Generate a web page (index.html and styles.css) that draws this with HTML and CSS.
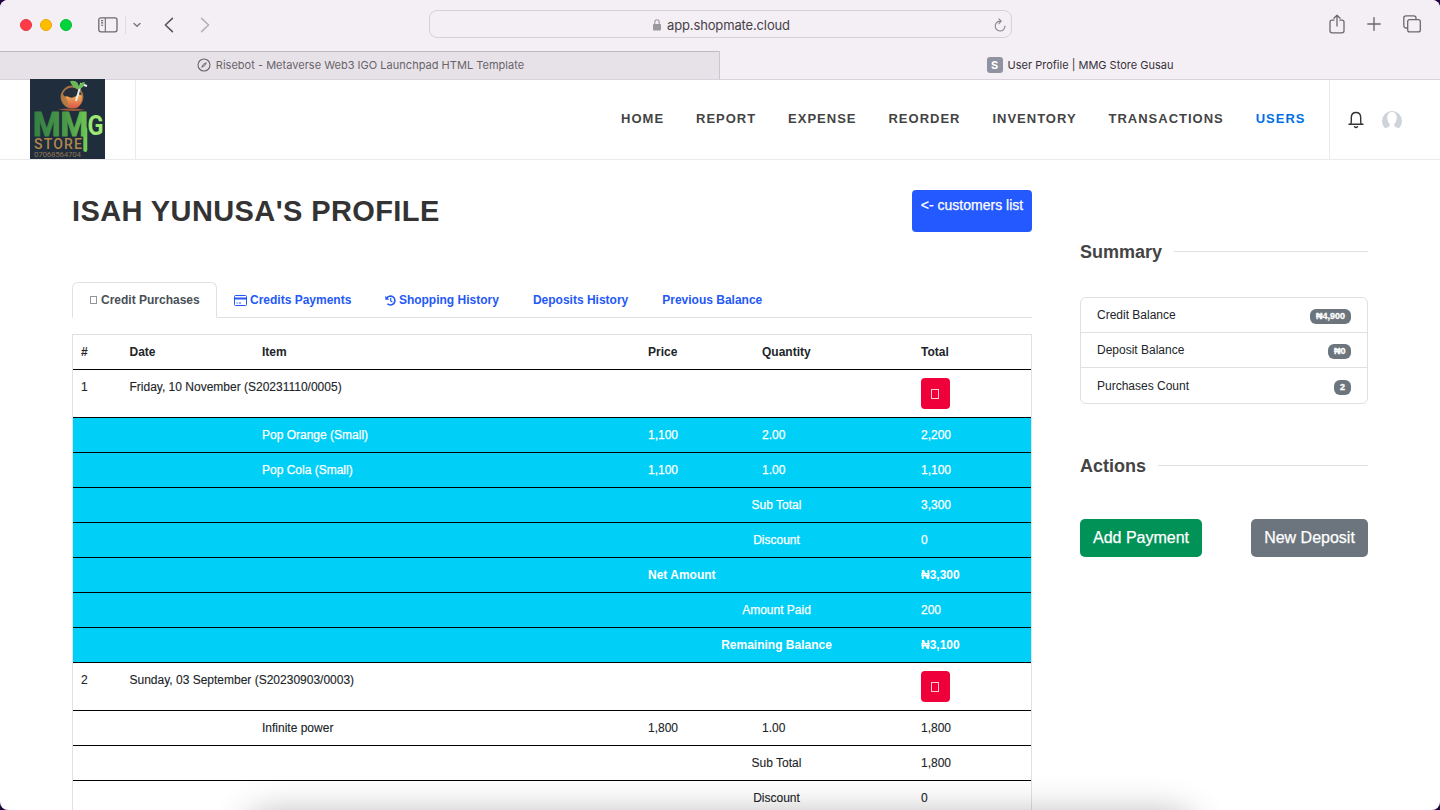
FILE: index.html
```
<!DOCTYPE html>
<html lang="en">
<head>
<meta charset="utf-8">
<title>User Profile | MMG Store Gusau</title>
<link rel="stylesheet" href="styles.css">
</head>
<body>
<div class="window">
  <header class="toolbar">
    <div class="toolbar-left">
      <div class="lights"><i class="light red"></i><i class="light yellow"></i><i class="light green"></i></div>
      <svg class="sidebar-icon" width="20" height="16" viewBox="0 0 20 16" fill="none" stroke="#6c686e" stroke-width="1.3"><rect x=".8" y=".8" width="18.2" height="14" rx="2"/><path d="M7.3 1v14M3 3.6h2.2M3 5.9h2.2M3 8.2h2.2" stroke-width="1.1"/></svg>
      <i class="divider"></i>
      <svg class="chevron" width="8" height="6" viewBox="0 0 8 6" fill="none" stroke="#7b7780" stroke-width="1.4" stroke-linecap="round" stroke-linejoin="round"><path d="M1 1.4l3 2.8 3-2.8"/></svg>
      <svg class="back" width="10" height="16" viewBox="0 0 10 16" fill="none" stroke="#5b575e" stroke-width="1.6" stroke-linecap="round" stroke-linejoin="round"><path d="M8.4 1.3L1.4 8l7 6.7"/></svg>
      <svg class="forward" width="10" height="16" viewBox="0 0 10 16" fill="none" stroke="#b6b1b8" stroke-width="1.6" stroke-linecap="round" stroke-linejoin="round"><path d="M1.6 1.3L8.6 8l-7 6.7"/></svg>
    </div>
    <div class="address">
      <div class="address-text">
        <svg class="lock" width="8" height="12" viewBox="0 0 8 12"><path d="M1.8 6V3.2a2.2 2.4 0 0 1 4.4 0V6" fill="none" stroke="#9b989d" stroke-width="1.1"/><rect x="0" y="5" width="8" height="6.6" rx="1" fill="#9b989d"/></svg>
        <span class="url">app.shopmate.cloud</span>
      </div>
      <svg class="reload" width="12" height="14" viewBox="0 0 12 14" fill="none" stroke="#88848b" stroke-width="1.1" stroke-linecap="round" stroke-linejoin="round"><path d="M6.8 3.2A4.9 4.9 0 1 0 11 8M4.9.9l2.3 2.3-2.3 2.4"/></svg>
    </div>
    <div class="toolbar-right">
      <svg width="16" height="20" viewBox="0 0 16 20" fill="none" stroke="#6c686e" stroke-width="1.3" stroke-linecap="round" stroke-linejoin="round"><path d="M5 6.2H3A2 2 0 0 0 1 8.2v8.600a2 2 0 0 0 2 2h10a2 2 0 0 0 2-2V8.2a2 2 0 0 0-2-2h-2M8 12V1.2M4.900 4.2L8 1.2l3.1 3"/></svg>
      <svg width="14" height="14" viewBox="0 0 14 14" fill="none" stroke="#6c686e" stroke-width="1.4" stroke-linecap="round"><path d="M7 .8v12.4M.8 7h12.4"/></svg>
      <svg width="18" height="18" viewBox="0 0 18 18" fill="none" stroke="#6c686e" stroke-width="1.3" stroke-linejoin="round"><rect x="4.7" y="4.7" width="12.6" height="12.2" rx="2"/><path d="M4.7 13H3a2.2 2.2 0 0 1-2.2-2.2V3A2.2 2.2 0 0 1 3 .8h7.800a2.200 2.200 0 0 1 2.200 2.200v1.700"/></svg>
    </div>
  </header>
  <div class="browser-tabs">
    <div class="browser-tab inactive">
      <svg width="14" height="14" viewBox="0 0 14 14"><circle cx="7" cy="7" r="6" fill="none" stroke="#68646a" stroke-width="1.1"/><path d="M10 4L8 8 4 10l2-4z" fill="#68646a"/><circle cx="7" cy="7" r=".8" fill="#e7e2e8"/></svg>
      <span class="first-title">Risebot - Metaverse Web3 IGO Launchpad HTML Template</span>
    </div>
    <div class="browser-tab">
      <b class="favicon">S</b>
      <span>User Profile | MMG Store Gusau</span>
    </div>
  </div>

  <nav class="site-nav">
    <div class="brand">
      <svg class="logo" width="75" height="80" viewBox="0 0 75 80">
        <defs>
          <linearGradient id="leaf" x1="0" x2="1"><stop offset="0" stop-color="#337f42"/><stop offset=".6" stop-color="#4a9a48"/><stop offset="1" stop-color="#70c855"/></linearGradient>
          <linearGradient id="juice" x1="0" y1="0" x2="0" y2="1"><stop offset="0" stop-color="#f0b65b"/><stop offset="1" stop-color="#df5648"/></linearGradient>
        </defs>
        <rect width="75" height="80" fill="#202d3c"/>
        <circle cx="42" cy="18" r="10.500" fill="#27303a" stroke="#a47345" stroke-width="1.800"/>
        <path d="M33 19q3-3 6-1t7-1 6 0q0 10-6 12-9 1-13-10z" fill="url(#juice)"/>
        <path d="M31.500 14q0 12 7 15 1-8-7-15z" fill="#b57b43"/>
        <path d="M46 22L51 5l6 2" fill="none" stroke="#e7eee8" stroke-width="2"/>
        <path d="M40 2q9-2 9 8-7-1-9-8zM48 10q1-7 7-7-1 7-7 7z" fill="#69ba5b"/>
        <path d="M28 30.500q14-2 27 .5-13 2-27-.5z" fill="#9d5636"/>
        <path d="M55.300 50V71" stroke="#72ca55" stroke-width="4" stroke-linecap="round"/>
        <text class="logo-main" x="3" y="57" textLength="55" lengthAdjust="spacingAndGlyphs">MM</text>
        <text class="logo-g" x="57.500" y="56" textLength="16" lengthAdjust="spacingAndGlyphs">G</text>
        <text class="logo-store" x="4" y="70" textLength="48">STORE</text>
        <text class="logo-phone" x="4" y="78" textLength="47">07068564704</text>
      </svg>
    </div>
    <div class="menu">
      <a>HOME</a><a>REPORT</a><a>EXPENSE</a><a>REORDER</a><a>INVENTORY</a><a>TRANSACTIONS</a><a class="current">USERS</a>
    </div>
    <div class="account">
      <svg width="16" height="18" viewBox="0 0 16 18" fill="none" stroke="#333" stroke-width="1.400" stroke-linecap="round" stroke-linejoin="round"><path d="M1 13.300h14M2.600 13.300Q3.300 12 3.300 10V6.500C3.300 3.500 5.300 1.500 8 1.500s4.700 2 4.700 5V10q0 2 .7 3.300"/><path d="M6.500 15.800q1.500 1.400 3 0"/></svg>
      <svg width="20" height="20" viewBox="0 0 20 20"><path d="M3 18.200A10 10 0 1 1 17 18.200Q13.500 17.500 12.700 16.600 12 15.300 12.300 13.900C15.700 11 16 1.900 10 1.900S4.300 11 7.700 13.900Q8 15.300 7.300 16.600 6.500 17.500 3 18.200z" fill="#ced4da"/></svg>
    </div>
  </nav>

  <main class="page">
    <section class="profile">
      <div class="profile-head">
        <h1>ISAH YUNUSA'S PROFILE</h1>
        <a class="list-button">&lt;- customers list</a>
      </div>
      <div class="tabs">
        <a class="tab active"><i class="box"></i>Credit Purchases</a>
        <a class="tab"><svg width="13" height="11" viewBox="0 0 13 11"><rect x=".5" y=".5" width="12" height="10" rx="1" fill="none" stroke="#2459f5"/><path d="M1 2.500h11v2H1z" fill="#2459f5"/><path d="M2.500 8h1.300M4.800 8H7" stroke="#2459f5"/></svg>Credits Payments</a>
        <a class="tab history"><svg width="11" height="11" viewBox="0 0 11 11" fill="none" stroke="#2459f5"><path d="M1.700 3.300A4.400 4.400 0 1 1 2.400 8.700" stroke-width="1.600"/><path d="M.3.700v4h4z" fill="#2459f5" stroke="none"/><path d="M5.700 3v2.900l1.700 1.200" stroke-width="1.200"/></svg>Shopping History</a>
        <a class="tab">Deposits History</a>
        <a class="tab">Previous Balance</a>
      </div>
      <table class="credits">
        <colgroup><col class="c-num"><col class="c-date"><col class="c-item"><col class="c-price"><col class="c-qty"><col class="c-total"></colgroup>
        <thead><tr><th>#</th><th>Date</th><th>Item</th><th>Price</th><th>Quantity</th><th>Total</th></tr></thead>
        <tbody>
          <tr class="order"><td>1</td><td colspan="4">Friday, 10 November (S20231110/0005)</td><td><a class="delete"><i class="box"></i></a></td></tr>
          <tr class="info"><td></td><td></td><td>Pop Orange (Small)</td><td>1,100</td><td>2.00</td><td>2,200</td></tr>
          <tr class="info"><td></td><td></td><td>Pop Cola (Small)</td><td>1,100</td><td>1.00</td><td>1,100</td></tr>
          <tr class="info"><td colspan="3"></td><td class="mid" colspan="2">Sub Total</td><td>3,300</td></tr>
          <tr class="info"><td colspan="3"></td><td class="mid" colspan="2">Discount</td><td>0</td></tr>
          <tr class="info"><td colspan="3"></td><th colspan="2">Net Amount</th><th>₦3,300</th></tr>
          <tr class="info"><td colspan="3"></td><td class="mid" colspan="2">Amount Paid</td><td>200</td></tr>
          <tr class="info"><td colspan="3"></td><th class="mid" colspan="2">Remaining Balance</th><th>₦3,100</th></tr>
          <tr class="order"><td>2</td><td colspan="4">Sunday, 03 September (S20230903/0003)</td><td><a class="delete"><i class="box"></i></a></td></tr>
          <tr><td></td><td></td><td>Infinite power</td><td>1,800</td><td>1.00</td><td>1,800</td></tr>
          <tr><td colspan="3"></td><td class="mid" colspan="2">Sub Total</td><td>1,800</td></tr>
          <tr><td colspan="3"></td><td class="mid" colspan="2">Discount</td><td>0</td></tr>
        </tbody>
      </table>
    </section>
    <aside class="side">
      <h2>Summary</h2>
      <ul class="summary">
        <li><span>Credit Balance</span><b class="badge">₦4,900</b></li>
        <li><span>Deposit Balance</span><b class="badge">₦0</b></li>
        <li><span>Purchases Count</span><b class="badge">2</b></li>
      </ul>
      <h2>Actions</h2>
      <div class="actions"><a class="btn pay">Add Payment</a><a class="btn deposit">New Deposit</a></div>
    </aside>
  </main>
  <div class="dock-shadow"></div>
</div>
</body>
</html>
```
FILE: styles.css
```
* { box-sizing: border-box; }
html { background: #210543; }
body { margin: 0; height: 810px; overflow: hidden; font-family: "Liberation Sans", Arial, sans-serif; font-size: 12px; color: #212529; }
svg { display: block; flex: none; }
i { display: block; flex: none; }
.window { position: relative; width: 1440px; height: 810px; overflow: hidden; background: #fff; border-radius: 8px; display: flex; flex-direction: column; }

/* Browser toolbar */
.toolbar { height: 51px; flex: none; background: #f4eff5; display: grid; grid-template-columns: 429px 583px 1fr; }
.toolbar-left { height: 50px; display: flex; align-items: center; padding-left: 20px; }
.lights { display: flex; gap: 8px; }
.light { width: 12px; height: 12px; border-radius: 50%; border: 1px solid #e83340; }
.red { background: #ff3b47; }
.yellow { background: #ffbd00; border-color: #e9a800; }
.green { background: #00d53c; border-color: #00bd32; }
.sidebar-icon { margin-left: 26px; margin-top: -1px; }
.divider { width: 1px; height: 18px; background: #e2dde3; margin-left: 7px; }
.chevron { margin-left: 7px; }
.back { margin-left: 23px; }
.forward { margin-left: 26px; }
.address { height: 28px; margin-top: 10px; border: 1px solid #d6d1d8; border-radius: 8px; display: flex; align-items: center; }
.address-text { display: flex; align-items: center; gap: 6px; padding-left: 223px; flex: 1; }
.lock { margin-top: 2px; }
.url { font: 13px/20px Inter, sans-serif; color: #454148; letter-spacing: -.14px; padding-top: 2px; }
.reload { margin-right: 5px; margin-top: 1px; }
.toolbar-right { height: 48px; display: flex; align-items: center; justify-content: flex-end; padding-right: 19px; gap: 22px; }

.browser-tabs { height: 29px; flex: none; display: grid; grid-template-columns: 720px 720px; background: #f4eff5; border-bottom: 1px solid #d8d3da; }
.browser-tab { display: flex; align-items: center; justify-content: center; gap: 5px; font: 11px/14px Inter, sans-serif; color: #353138; }
.inactive { background: #e7e2e8; box-shadow: inset 0 1px #bfbac0; border-right: 1px solid #ccc7ce; color: #68646a; padding-left: 2px; }
.first-title { letter-spacing: .02px; }
.favicon { width: 16px; height: 16px; border-radius: 3px; background: #8f92a1; color: #fff; text-align: center; font: 700 11px/17px Inter, sans-serif; }

/* Site header */
.site-nav { height: 80px; flex: none; display: flex; border-bottom: 1px solid #ebebeb; }
.brand { width: 136px; padding-left: 30px; border-right: 1px solid #ebebeb; }
.logo { margin-top: -1px; }
.logo-main { font: 700 33px Roboto, sans-serif; fill: url(#leaf); stroke: url(#leaf); stroke-width: 1px; stroke-linejoin: round; }
.logo-g { font: 700 28px Roboto, sans-serif; fill: #9be873; }
.logo-store { font: 500 14px Roboto, sans-serif; fill: #b3854c; }
.logo-phone { font: 8px Roboto, sans-serif; fill: #8c7355; }
.menu { flex: 1; display: flex; justify-content: flex-end; align-items: center; gap: 31.950px; padding-right: 23.500px; font-weight: 700; font-size: 13px; letter-spacing: 1px; color: #444; }
.menu a { margin-top: -3px; }
.menu .current { color: #006fe6; }
.account { width: 111px; border-left: 1px solid #ebebeb; display: flex; align-items: center; padding-left: 18px; gap: 18px; }

/* Page */
.page { display: grid; grid-template-columns: 960px 288px; gap: 48px; padding: 30px 72px 0; }
.profile-head { display: flex; justify-content: space-between; height: 92px; }
h1 { margin: 2px 0 0; font-size: 29px; line-height: 38px; letter-spacing: .4px; color: #333; white-space: nowrap; }
.list-button { width: 120px; height: 42px; background: #2459ff; color: #fff; border-radius: 4px; font-size: 14px; line-height: 20px; padding-top: 5px; text-align: center; white-space: nowrap; -webkit-text-stroke: .25px; }
.tabs { display: flex; height: 36px; border-bottom: 1px solid #dee2e6; }
.tab { height: 36px; display: flex; align-items: center; gap: 3px; padding: 0 17px; font-weight: 700; color: #2459f5; white-space: nowrap; }
.history { gap: 2.500px; }
.active { width: 145px; border: 1px solid #dee2e6; border-bottom-color: #fff; border-radius: 6px 6px 0 0; background: #fff; color: #495057; padding-right: 0; gap: 4px; }
.box { width: 7px; height: 8px; border: 1px solid currentColor; opacity: .6; }
.credits { margin-top: 16px; width: 960px; table-layout: fixed; border-collapse: separate; border-spacing: 0; border: 1px solid #dee2e6; }
.c-num { width: 48.500px; }
.c-date { width: 132.500px; }
.c-item { width: 386px; }
.c-price { width: 114px; }
.c-qty { width: 159px; }
.c-total { width: 118px; }
.credits th, .credits td { height: 35px; padding: 8px 8px 0; line-height: 18px; border-bottom: 1px solid #000; text-align: left; vertical-align: top; white-space: nowrap; }
.credits .order td { height: 48px; }
.credits .mid { text-align: center; }
.credits td { -webkit-text-stroke: .12px; }
.info { background: #00cff8; color: #fff; }
.credits .info td { -webkit-text-stroke: .25px; }
.delete { display: flex; width: 29px; height: 31px; align-items: center; justify-content: center; background: #ef003a; border-radius: 4px; color: #fff; padding-right: 1px; }
.delete .box { height: 10px; width: 8px; opacity: .8; }

/* Sidebar */
.side { padding-top: 51px; }
.side h2 { margin: 0; display: flex; align-items: center; gap: 12px; font-size: 18px; line-height: 22px; color: #444; }
.side h2::after { content: ""; flex: 1; height: 1px; margin-top: -2px; background: #e1e1e1; }
.summary { list-style: none; margin: 34px 0 51px; padding: 0; border: 1px solid #dee0e2; border-radius: 6px; height: 107px; display: grid; grid-template-rows: 34px 35px 36px; }
.summary li { display: flex; justify-content: space-between; align-items: flex-start; padding: 8px 16px 0; line-height: 18px; border-top: 1px solid #dee0e2; }
.summary li:first-child { border-top: 0; }
.summary li:last-child { padding-top: 9px; }
.badge { background: #6c757d; color: #fff; border-radius: 6px; height: 15px; padding: 0 6px; margin-top: 3px; font-size: 9px; line-height: 14px; -webkit-text-stroke: .3px; }
.summary li:nth-child(2) .badge { padding: 0 5.500px; }
.actions { display: flex; justify-content: space-between; margin-top: 42px; }
.btn { height: 38px; border-radius: 5px; color: #fff; font-size: 16px; line-height: 37px; text-align: center; -webkit-text-stroke: .25px; }
.pay { width: 122px; background: #009257; }
.deposit { width: 117px; background: #6c757d; }

/* Soft shadow cast by the dock over the page's lower edge */
.dock-shadow { position: absolute; left: 250px; top: 818px; width: 940px; height: 60px; border-radius: 20px; box-shadow: 0 0 36px 4px rgba(0, 0, 0, .3); }
```
